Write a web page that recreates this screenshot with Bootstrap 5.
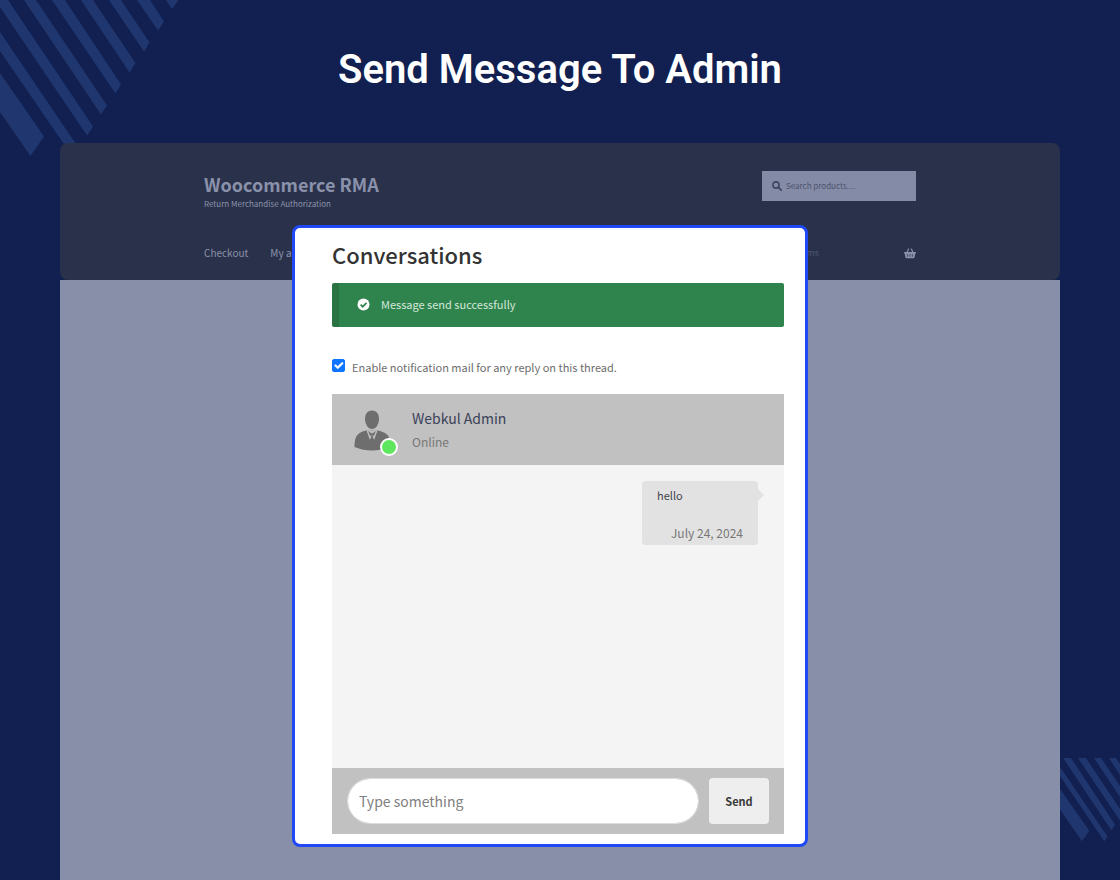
<!DOCTYPE html>
<html lang="en">
<head>
<meta charset="utf-8">
<meta name="viewport" content="width=device-width, initial-scale=1">
<title>Send Message To Admin</title>
<link href="https://cdn.jsdelivr.net/npm/bootstrap@5.3.0/dist/css/bootstrap.min.css" rel="stylesheet">
<style>
  body { background: #112050; font-family: "Noto Sans CJK JP", "Noto Sans", sans-serif; font-size: 11px; line-height: 20px; color: #6d6d6d; }
  .page-title { font: 600 40px/48px Roboto, sans-serif; color: #fff; padding: 46px 0 49px; }
  .stripes { position: absolute; fill: #20366f; z-index: -1; }
  .stripes-start { left: 0; top: 0; }
  .stripes-end { right: 0; bottom: 38px; }

  /* storefront page and the dialog share one grid cell */
  .stage { display: grid; margin: 0 60px; }
  .stage > * { grid-area: 1 / 1; }
  .shop-body { background: #8890a9; }
  .shop-header { background: #2a314a; color: #8a91ab; border-radius: 8px; padding: 27px 144px 17px; height: 137px; }
  .shop-header a { color: inherit; text-decoration: none; }
  .shop-name { font-size: 18px; line-height: 28px; font-weight: 700; }
  .shop-tagline { font-size: 8px; line-height: 12px; }
  .shop-links { font-size: 10px; gap: 22px; }
  .search-box { width: 154px; height: 30px; background: #848ba6; color: #3f4762; padding: 0 10px; margin-top: 1px; gap: 4px; }
  .search-box input { border: 0; background: none; font-size: 8px; padding: 0; min-width: 0; outline: 0; }
  .search-box input::placeholder { color: #4b536e; opacity: 1; }
  .cart-link { gap: 85px; }
  .cart-count { font-size: 9px; color: #505875; }

  .dialog-box { justify-self: center; align-self: start; width: 516px; max-width: 100%; margin: 82px 20px 33px 0; background: #fff; border: 3px solid #2048f5; border-radius: 8px; padding: 12px 21px 10px 37px; }
  .dialog-box h2 { font-size: 22px; line-height: 28px; font-weight: 500; color: #333; margin-bottom: 15px; }
  .notice { background: #2f844d; color: #d5e7db; border: 0; border-left: 7px solid #2a7444; border-radius: 2px; padding: 11px 18px 13px; margin-bottom: 30px; gap: 11px; }
  .notify-row { gap: 7px; margin-bottom: 17px; }
  .notify-row .form-check-input { width: 13px; height: 13px; margin: 0 0 4px; border-radius: 2px; }
  .notify-row .form-check-input:checked { background-color: #0d75ff; border-color: #0d75ff; background-size: 15px 15px; }
  .chat-head { background: #c1c1c1; padding: 13px 22px; height: 71px; gap: 20px; }
  .chat-name { font-size: 14px; line-height: 24px; color: #3a4158; }
  .chat-state { font-size: 12px; line-height: 24px; color: #777; }
  .online-dot { position: absolute; right: -6px; bottom: -5px; width: 18px; height: 18px; border-radius: 50%; background: #5ee65e; border: 2px solid #fff; }
  .chat-log { background: #f4f4f4; height: 303px; padding: 16px 26px; }
  .bubble { position: relative; background: #e2e2e2; border-radius: 4px; width: 116px; height: 64px; padding: 4px 15px 0; margin-left: auto; }
  .bubble::after { content: ""; position: absolute; left: 100%; top: 8px; border: 6px solid transparent; border-left-color: #e2e2e2; border-right: 0; }
  .bubble p { color: #43454b; margin-bottom: 18px; }
  .bubble time { display: block; text-align: right; font-size: 12px; color: #777; }
  .chat-form { background: #c1c1c1; padding: 10px 15px; gap: 10px; }
  .chat-form .form-control { height: 46px; border: 1px solid #ddd; border-radius: 23px; padding: 0 11px; font-size: 14px; color: #43454b; }
  .chat-form .form-control::placeholder { color: #808080; }
  .chat-form .btn { width: 60px; height: 46px; flex: none; padding: 0; font-size: 11px; font-weight: 700; background: #eee; color: #3a3a3a; border: 0; border-radius: 4px; }
</style>
</head>
<body>
<div class="position-relative min-vh-100 d-flex flex-column overflow-hidden z-0">
  <svg class="stripes stripes-start" width="180" height="157" viewBox="0 0 180 157" aria-hidden="true">
    <path d="M0 73 44 136.500 30.500 156 0 112ZM0 32 80 150H68L0 51ZM0 0H8L93 126.500 87 135.500 0 7ZM24 0H36L107 105.500 101 114.500ZM52 0H65L121 84.500 115.500 93.500ZM81 0H93L135.500 63 129.500 72.500ZM109 0H121L149.500 42.500 144 51.500ZM137 0H150L164 21.500 158 30.500ZM166 0H178.500L172 9Z"/>
  </svg>
  <svg class="stripes stripes-end" width="60" height="84" viewBox="0 0 60 84" aria-hidden="true">
    <path d="M0 31 29.300 72.700 22 83.300 0 51.500ZM0 9 47.700 78.700 44.300 83.300 0 18ZM3 0H11L55 66.500 51.500 72.500ZM18 0H26L60 51V62.500ZM34 0H41L60 28V39ZM49 0H56L60 6V17Z"/>
  </svg>

  <h1 class="page-title text-center m-0">Send Message To Admin</h1>

  <div class="stage flex-grow-1">
    <div class="d-flex flex-column">
      <header class="shop-header d-flex flex-column justify-content-between">
        <div class="d-flex justify-content-between align-items-start">
          <div>
            <a class="shop-name d-block" href="#">Woocommerce RMA</a>
            <div class="shop-tagline">Return Merchandise Authorization</div>
          </div>
          <label class="search-box d-flex align-items-center">
            <svg width="10" height="10" viewBox="0 0 10 10" class="flex-shrink-0" aria-hidden="true"><circle cx="4" cy="4" r="3.100" fill="none" stroke="currentColor" stroke-width="1.600"/><path d="M6.200 6.200 9.200 9.200" stroke="currentColor" stroke-width="1.900" stroke-linecap="round"/></svg>
            <input type="search" placeholder="Search products…" aria-label="Search products">
          </label>
        </div>
        <nav class="shop-links d-flex align-items-center">
          <a href="#">Checkout</a>
          <a href="#">My account</a>
          <a class="cart-link ms-auto d-flex align-items-center" href="#" aria-label="Cart">
            <span class="cart-count">0 items</span>
            <svg width="12" height="11" viewBox="0 0 12 11" aria-hidden="true"><path d="M3 4.500 4.600 1M9 4.500 7.400 1" stroke="currentColor" stroke-width="1.200" stroke-linecap="round"/><path fill="currentColor" fill-rule="evenodd" d="M.5 4H11.500Q12 4 12 4.500V5Q12 5.500 11.300 5.500L10.500 9.500Q10.300 10.300 9.500 10.300H2.500Q1.700 10.300 1.500 9.500L.7 5.500Q0 5.500 0 5V4.500Q0 4 .5 4ZM3.400 6V8.800H4.100V6ZM5.650 6V8.800H6.350V6ZM7.900 6V8.800H8.600V6Z"/></svg>
          </a>
        </nav>
      </header>
      <div class="shop-body flex-grow-1"></div>
    </div>

    <main class="dialog-box">
      <h2>Conversations</h2>
      <div class="notice d-flex align-items-center" role="status">
        <svg width="13" height="13" viewBox="0 0 13 13" aria-hidden="true"><circle cx="6.500" cy="6.500" r="6" fill="#fff"/><path d="M3.600 6.700 5.700 8.700 9.500 4.800" fill="none" stroke="#2f844d" stroke-width="1.700"/></svg>
        <span>Message send successfully</span>
      </div>
      <div class="notify-row d-flex align-items-center">
        <input class="form-check-input" type="checkbox" id="notify" checked>
        <label for="notify">Enable notification mail for any reply on this thread.</label>
      </div>
      <section>
        <div class="chat-head d-flex align-items-center">
          <div class="position-relative">
            <svg class="d-block" width="38" height="42" viewBox="0 0 38 42" fill="#6e6e6e" aria-hidden="true">
              <path d="M18 1.500C22.500 1.500 25 5 25 10S22 20 18 20 11 15 11 10 13.500 1.500 18 1.500Z"/>
              <path d="M12 21.500H24C32 23.500 35 26 35.500 31V38Q27 41.500 18 41.500T.5 38C.5 29 2 24 12 21.500Z"/>
              <path d="M13 21 18 23.500 23 21 22 21.500H14Z" fill="#c1c1c1"/>
              <path d="M13.200 21.500 16 29 18 25.500 20 29 22.800 21.500" fill="none" stroke="#c1c1c1" stroke-width="1.400"/>
              <path d="M14.500 21.500 18 24 21.500 21.500" fill="none" stroke="#c1c1c1" stroke-width="1.200"/>
              <path d="M16.800 24.500H19.200L18.600 26.500 19.500 32H16.500L17.400 26.500Z"/>
            </svg>
            <span class="online-dot"></span>
          </div>
          <div>
            <div class="chat-name">Webkul Admin</div>
            <div class="chat-state">Online</div>
          </div>
        </div>
        <div class="chat-log">
          <div class="bubble">
            <p>hello</p>
            <time datetime="2024-07-24">July 24, 2024</time>
          </div>
        </div>
        <form class="chat-form d-flex">
          <input class="form-control" type="text" placeholder="Type something" aria-label="Message">
          <button class="btn" type="button">Send</button>
        </form>
      </section>
    </main>
  </div>
</div>
<script src="https://cdn.jsdelivr.net/npm/bootstrap@5.3.0/dist/js/bootstrap.bundle.min.js"></script>
</body>
</html>
